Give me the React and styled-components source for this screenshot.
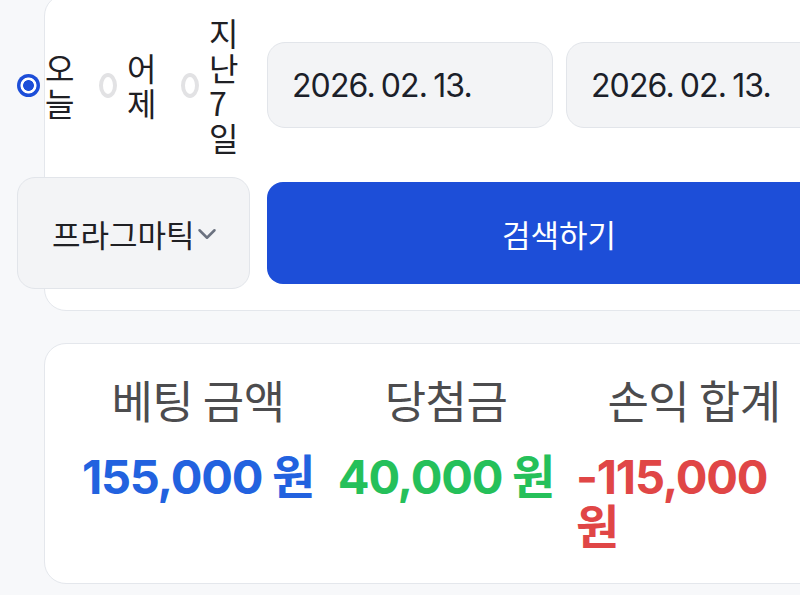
import React from "react";
import styled, { createGlobalStyle } from "styled-components";
import { ChevronDown } from "lucide-react";

const Global = createGlobalStyle`
  html, body { margin: 0; padding: 0; background: #f7f8fa; overflow: hidden; }
  body { font-family: Inter, "Noto Sans CJK KR", sans-serif; }
`;

const Page = styled.div`
  width: 860px;
  height: 595px;
  padding-left: 44px;
  box-sizing: border-box;
  display: flex;
  flex-direction: column;
  gap: 32px;
`;

const Card = styled.section`
  width: 802px;
  box-sizing: border-box;
  background: #fff;
  border: 1.5px solid #e4e7ec;
  border-radius: 22px;
`;

const FilterCard = styled(Card)`
  margin-top: -6px;
  padding: 20px 0 21px;
`;

const FilterBody = styled.div`
  margin-left: -28px;
  width: 834px;
  display: flex;
  flex-direction: column;
  gap: 22px;
`;

const Row = styled.div`
  display: flex;
  align-items: center;
  gap: ${(p) => p.$gap}px;
`;

const RadioGroup = styled.div`
  display: flex;
  align-items: center;
  gap: 20px;
  margin-right: 11px;
`;

const RadioItem = styled.label`
  display: flex;
  align-items: center;
  gap: ${(p) => (p.$checked ? 5 : 10)}px;
`;

const RadioDot = styled.span`
  flex: none;
  box-sizing: border-box;
  width: ${(p) => (p.$checked ? 23 : 18)}px;
  height: ${(p) => (p.$checked ? 23 : 25)}px;
  border-radius: 50%;
  ${(p) =>
    p.$checked
      ? `background: radial-gradient(circle, #1d4ed8 0 5px, #ffffff 5.8px 7.6px, #1d4ed8 8.4px);`
      : `background: #fff; border: 4px solid #e2e2e4;`}
`;

const RadioLabel = styled.span`
  width: 34px;
  font-family: "Noto Sans CJK KR", sans-serif;
  font-size: 32px;
  line-height: 35px;
  color: #1f2024;
  word-break: break-all;
`;

const DateBox = styled.div`
  flex: none;
  width: 286px;
  height: 86px;
  box-sizing: border-box;
  background: #f3f4f6;
  border: 1.5px solid #e2e5ea;
  border-radius: 18px;
  display: flex;
  align-items: center;
  padding-left: 24px;
  font-family: Inter, sans-serif;
  font-size: 32px;
  letter-spacing: -0.9px;
  word-spacing: -2px;
  color: #1b1f2a;
`;

const Select = styled.div`
  flex: none;
  width: 233px;
  height: 112px;
  box-sizing: border-box;
  background: #f3f4f6;
  border: 1.5px solid #e2e5ea;
  border-radius: 18px;
  display: flex;
  align-items: center;
  padding-left: 34px;
  font-family: "Noto Sans CJK KR", sans-serif;
  font-size: 31px;
  color: #1f2024;
  white-space: nowrap;
  svg { flex: none; margin-top: 2px; margin-left: -3px; }
`;

const SearchButton = styled.button`
  flex: none;
  width: 584px;
  height: 102px;
  border: none;
  border-radius: 16px;
  background: #1d4ed8;
  color: #fff;
  font-family: "Noto Sans CJK KR", sans-serif;
  font-size: 31px;
  padding: 0;
`;

const StatsCard = styled(Card)`
  padding: 30px 0 31px 29px;
  display: grid;
  grid-template-columns: repeat(3, 248px);
`;

const Stat = styled.div`
  display: flex;
  flex-direction: column;
  align-items: center;
  gap: 26px;
`;

const StatTitle = styled.div`
  font-family: "Noto Sans CJK KR", sans-serif;
  font-size: 45px;
  line-height: 52px;
  font-weight: 400;
  color: #4c4c4e;
  letter-spacing: -0.5px;
`;

const StatValue = styled.div`
  font-family: Inter, "Noto Sans CJK KR", sans-serif;
  font-size: 47px;
  line-height: 50px;
  font-weight: 700;
  letter-spacing: -1.2px;
  color: ${(p) => p.$color};
  align-self: ${(p) => (p.$wrap ? "stretch" : "center")};
  padding-left: ${(p) => (p.$wrap ? 6 : 0)}px;
`;

const ranges = [
  { label: "오늘", checked: true },
  { label: "어제", checked: false },
  { label: "지난7일", checked: false },
];

const stats = [
  { title: "베팅 금액", value: "155,000 원", color: "#2262df" },
  { title: "당첨금", value: "40,000 원", color: "#25c05a" },
  { title: "손익 합계", value: "-115,000 원", color: "#e04646", wrap: true },
];

export default function App() {
  return (
    <>
      <Global />
      <Page>
        <FilterCard>
          <FilterBody>
            <Row $gap={13}>
              <RadioGroup>
                {ranges.map((r) => (
                  <RadioItem key={r.label} $checked={r.checked}>
                    <RadioDot $checked={r.checked} />
                    <RadioLabel>{r.label}</RadioLabel>
                  </RadioItem>
                ))}
              </RadioGroup>
              <DateBox>2026. 02. 13.</DateBox>
              <DateBox>2026. 02. 13.</DateBox>
            </Row>
            <Row $gap={17}>
              <Select>
                프라그마틱
                <ChevronDown size={30} color="#6b7280" strokeWidth={2} />
              </Select>
              <SearchButton>검색하기</SearchButton>
            </Row>
          </FilterBody>
        </FilterCard>
        <StatsCard>
          {stats.map((s) => (
            <Stat key={s.title}>
              <StatTitle>{s.title}</StatTitle>
              <StatValue $color={s.color} $wrap={s.wrap}>
                {s.value}
              </StatValue>
            </Stat>
          ))}
        </StatsCard>
      </Page>
    </>
  );
}
